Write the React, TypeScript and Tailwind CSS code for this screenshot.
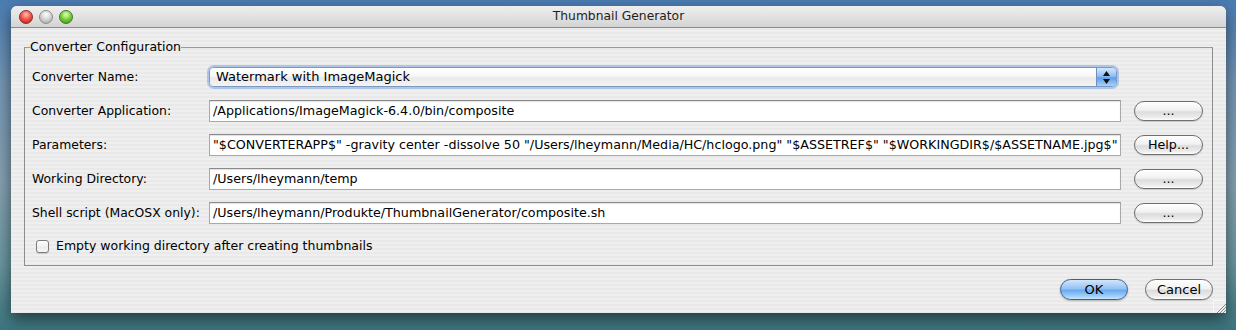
const font = "font-['Lucida_Grande','DejaVu_Sans',sans-serif] text-[12.7px]";

function Light({ color }: { color: 'red' | 'gray' | 'green' }) {
  const cls =
    color === 'red'
      ? 'bg-[radial-gradient(circle_at_50%_30%,#ffc0b8_0%,#f25a4e_45%,#b3170f_100%)] border-[#8a2a24]'
      : color === 'gray'
      ? 'bg-[radial-gradient(circle_at_50%_30%,#ffffff_0%,#d6d6d6_45%,#9d9d9d_100%)] border-[#8d8d8d]'
      : 'bg-[radial-gradient(circle_at_50%_30%,#e6ffc0_0%,#7fd33d_45%,#2f8a12_100%)] border-[#3f7a22]';
  return <div className={`w-[14px] h-[14px] rounded-full border ${cls}`} />;
}

function Field({ value }: { value: string }) {
  return (
    <div className="w-[912px] h-[22px] shrink-0 bg-white border border-[#a9a9a9] border-t-[#8a8a8a] shadow-[inset_0_1px_1px_rgba(0,0,0,0.12)] flex items-center pl-[3px] overflow-hidden whitespace-nowrap text-black">
      {value}
    </div>
  );
}

function PillButton({ label }: { label: string }) {
  return (
    <div className="ml-[13px] w-[69px] h-[20px] shrink-0 rounded-full border border-[#6e6e6e] bg-[linear-gradient(180deg,#ffffff_0%,#f1f1f1_45%,#dcdcdc_55%,#ececec_85%,#ffffff_100%)] shadow-[0_1px_1px_rgba(0,0,0,0.15)] flex items-center justify-center text-black">
      {label}
    </div>
  );
}

function Row({ label, value, button }: { label: string; value: string; button: string }) {
  return (
    <div className="flex items-center h-[34px]">
      <div className="w-[177px] shrink-0 text-[12.4px] text-black">{label}</div>
      <Field value={value} />
      <PillButton label={button} />
    </div>
  );
}

export default function App() {
  return (
    <div className={`w-[1236px] h-[330px] overflow-hidden pt-[6px] pl-[11px] bg-[linear-gradient(180deg,#4a7cb2_0%,#7597b6_25%,#86a2b3_55%,#6a97a1_80%,#3c7580_100%)] ${font}`}>
      <div className="relative w-[1215px] h-[307px] rounded-t-[6px] flex flex-col overflow-hidden shadow-[0_6px_16px_rgba(0,0,0,0.55)] bg-[repeating-linear-gradient(180deg,#efefef_0px,#efefef_2px,#e9e9e9_2px,#e9e9e9_4px)]">
        {/* title bar */}
        <div className="relative h-[22px] shrink-0 flex items-center pl-[8px] gap-[6px] border-b border-[#8b8b8b] bg-[linear-gradient(180deg,#eeeeee_0%,#e2e2e2_50%,#d3d3d3_100%)]">
          <Light color="red" />
          <Light color="gray" />
          <Light color="green" />
          <div className="absolute inset-0 flex items-center justify-center text-[12.3px] text-[#1e1e1e] pointer-events-none">
            Thumbnail Generator
          </div>
        </div>

        {/* body */}
        <div className="flex flex-col px-[13px]">
          <fieldset className="mt-[11px] border border-[#8e8e8e] border-t-[#9a9a9a] pl-[7px] pr-[9px] pt-[5px] pb-[3px]">
            <legend className="-ml-[2px] leading-[16px] text-[12.5px] text-black">Converter Configuration</legend>

            <div className="flex items-center h-[34px]">
              <div className="w-[177px] shrink-0 text-[12.4px] text-black">Converter Name:</div>
              <div className="w-[908px] h-[20px] shrink-0 flex rounded-[5px] border border-[#7f97bb] shadow-[0_0_0_2px_rgba(120,165,225,0.55)] overflow-hidden">
                <div className="flex-1 flex items-center pl-[6px] text-[13px] text-black bg-[linear-gradient(180deg,#ffffff_0%,#f7f7f7_45%,#e9e9e9_55%,#f4f4f4_100%)]">
                  Watermark with ImageMagick
                </div>
                <div className="w-[20px] shrink-0 flex flex-col items-center justify-center gap-[3px] border-l border-[#6e8fc0] bg-[linear-gradient(180deg,#d3e7fd_0%,#8fc0f5_45%,#5e9fea_55%,#a8d2fb_100%)]">
                  <svg width="7" height="5" viewBox="0 0 7 5"><path d="M3.5 0L7 5H0z" fill="#111" /></svg>
                  <svg width="7" height="5" viewBox="0 0 7 5"><path d="M0 0h7L3.5 5z" fill="#111" /></svg>
                </div>
              </div>
            </div>

            <Row label="Converter Application:" value="/Applications/ImageMagick-6.4.0/bin/composite" button="..." />
            <Row
              label="Parameters:"
              value={'"$CONVERTERAPP$" -gravity center -dissolve 50 "/Users/lheymann/Media/HC/hclogo.png" "$ASSETREF$" "$WORKINGDIR$/$ASSETNAME.jpg$"'}
              button="Help..."
            />
            <Row label="Working Directory:" value="/Users/lheymann/temp" button="..." />
            <Row
              label="Shell script (MacOSX only):"
              value="/Users/lheymann/Produkte/ThumbnailGenerator/composite.sh"
              button="..."
            />

            <div className="flex items-center h-[32px] pl-[4px] gap-[7px]">
              <div className="w-[13px] h-[13px] rounded-[3px] border border-[#7a7a7a] bg-[linear-gradient(180deg,#ffffff_0%,#ececec_60%,#f8f8f8_100%)] shadow-[0_1px_1px_rgba(0,0,0,0.15)]" />
              <span className="text-[12.5px] text-black">Empty working directory after creating thumbnails</span>
            </div>
          </fieldset>

          <div className="flex justify-end gap-[17px] mt-[13px]">
            <div className="w-[68px] h-[21px] rounded-full border border-[#3c5c9c] bg-[linear-gradient(180deg,#d2e6fb_0%,#94c3f4_45%,#6aaaee_55%,#9fd0fc_85%,#c7e6ff_100%)] shadow-[0_1px_2px_rgba(0,0,0,0.25)] flex items-center justify-center text-[13px] text-black">
              OK
            </div>
            <div className="w-[68px] h-[21px] rounded-full border border-[#6e6e6e] bg-[linear-gradient(180deg,#ffffff_0%,#f1f1f1_45%,#dcdcdc_55%,#ececec_85%,#ffffff_100%)] shadow-[0_1px_1px_rgba(0,0,0,0.15)] flex items-center justify-center text-[13px] text-black">
              Cancel
            </div>
          </div>
        </div>

        {/* resize grip */}
        <div className="absolute right-0 bottom-0 w-[13px] h-[13px] border-t border-l border-[#f8f8f8]">
          <svg width="13" height="13" viewBox="0 0 13 13" className="block">
            <path d="M3 12L12 3M6 12L12 6M9 12L12 9" stroke="#8a8a8a" strokeWidth="1" />
          </svg>
        </div>
      </div>
    </div>
  );
}
